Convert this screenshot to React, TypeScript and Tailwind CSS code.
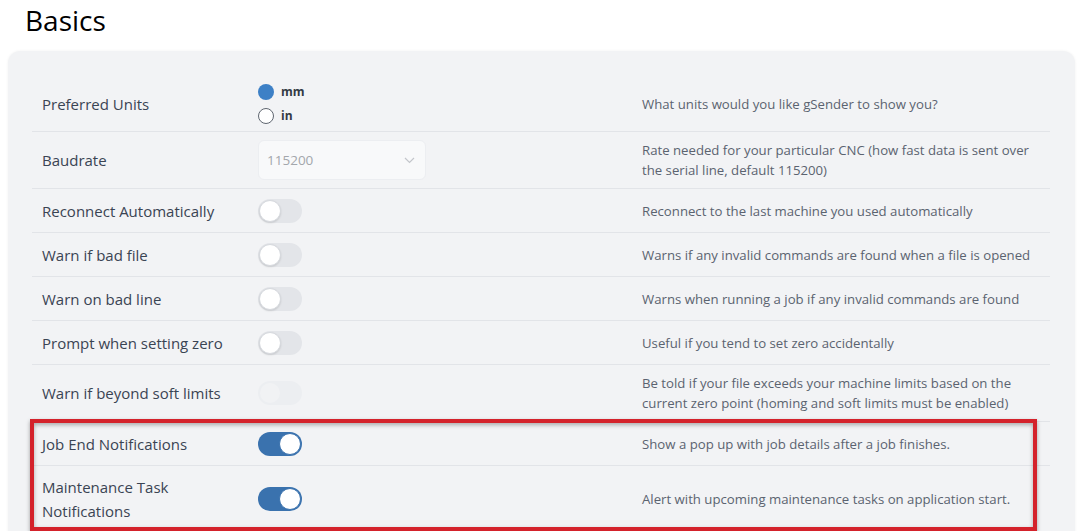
import React from "react";

type Row = {
  label: React.ReactNode;
  control: React.ReactNode;
  desc: React.ReactNode;
  h: string;
};

function Toggle({ on, disabled }: { on?: boolean; disabled?: boolean }) {
  if (disabled) {
    return (
      <div className="w-[44px] h-[24px] rounded-full bg-[#eceef1] flex items-center px-[2px]">
        <div className="w-[20px] h-[20px] rounded-full bg-[#f1f2f4]" />
      </div>
    );
  }
  if (on) {
    return (
      <div className="w-[44px] h-[24px] rounded-full bg-[#3a72ae] flex items-center justify-end px-[1px]">
        <div className="w-[22px] h-[22px] rounded-full bg-white border border-[#3a72ae]" />
      </div>
    );
  }
  return (
    <div className="w-[44px] h-[24px] rounded-full bg-[#e3e5e9] flex items-center px-[1px]">
      <div className="w-[22px] h-[22px] rounded-full bg-white border border-[#d6d9de] shadow-[0_1px_2px_rgba(0,0,0,0.12)]" />
    </div>
  );
}

function Radios() {
  return (
    <div className="flex flex-col gap-[8px] text-[12px] font-bold text-[#333a44]">
      <div className="flex items-center gap-[7px] h-[16px]">
        <div className="w-[16px] h-[16px] rounded-full bg-[#3d80c6]" />
        <span>mm</span>
      </div>
      <div className="flex items-center gap-[7px] h-[16px]">
        <div className="w-[16px] h-[16px] rounded-full bg-white border border-[#5f6670]" />
        <span>in</span>
      </div>
    </div>
  );
}

function Select() {
  return (
    <div className="w-[168px] h-[40px] rounded-[6px] bg-[#f8f9fa] border border-[#eceef1] flex items-center justify-between pl-[8px] pr-[10px] text-[13.5px] text-[#a3a7ac]">
      <span>115200</span>
      <svg width="11" height="7" viewBox="0 0 11 7" fill="none">
        <path d="M1 1l4.5 4.5L10 1" stroke="#c3c6cb" strokeWidth="1.2" />
      </svg>
    </div>
  );
}

export default function App() {
  const rows: Row[] = [
    { label: "Preferred Units", control: <Radios />, desc: "What units would you like gSender to show you?", h: "h-[56px]" },
    {
      label: "Baudrate",
      control: <Select />,
      desc: (
        <>
          Rate needed for your particular CNC (how fast data is sent over
          <br />
          the serial line, default 115200)
        </>
      ),
      h: "h-[57px]",
    },
    { label: "Reconnect Automatically", control: <Toggle />, desc: "Reconnect to the last machine you used automatically", h: "h-[44px]" },
    { label: "Warn if bad file", control: <Toggle />, desc: "Warns if any invalid commands are found when a file is opened", h: "h-[44px]" },
    { label: "Warn on bad line", control: <Toggle />, desc: "Warns when running a job if any invalid commands are found", h: "h-[44px]" },
    { label: "Prompt when setting zero", control: <Toggle />, desc: "Useful if you tend to set zero accidentally", h: "h-[44px]" },
    {
      label: "Warn if beyond soft limits",
      control: <Toggle disabled />,
      desc: (
        <>
          Be told if your file exceeds your machine limits based on the
          <br />
          current zero point (homing and soft limits must be enabled)
        </>
      ),
      h: "h-[57px]",
    },
    { label: "Job End Notifications", control: <Toggle on />, desc: "Show a pop up with job details after a job finishes.", h: "h-[44px]" },
    {
      label: (
        <>
          Maintenance Task
          <br />
          Notifications
        </>
      ),
      control: <Toggle on />,
      desc: "Alert with upcoming maintenance tasks on application start.",
      h: "h-[66px]",
    },
  ];

  return (
    <div
      className="relative w-[1086px] h-[531px] overflow-hidden bg-white"
      style={{ fontFamily: '"Open Sans", "Noto Sans", sans-serif' }}
    >
      <h1 className="pl-[25px] pt-[1px] text-[28px] leading-[38px] text-black font-normal">Basics</h1>
      <div className="mt-[12px] ml-[8px] w-[1067px] rounded-[12px] bg-[#f2f3f5] shadow-[0_0_3px_rgba(0,0,0,0.06)] pl-[24px] pr-[25px] pt-[25px] pb-[24px]">
        {rows.map((r, i) => (
          <div
            key={i}
            className={`${r.h} grid grid-cols-[226px_384px_1fr] items-center border-b border-[#e2e4e8]`}
          >
            <div className="pl-[10px] text-[15px] leading-[24px] text-[#3a4453]">{r.label}</div>
            <div>{r.control}</div>
            <div className="text-[13.2px] leading-[20px] text-[#5b6370]">{r.desc}</div>
          </div>
        ))}
      </div>
      <div className="absolute left-[30px] top-[419px] w-[1007px] h-[112px] border-[4px] border-[#d4222b] shadow-[0_2px_4px_rgba(0,0,0,0.35),inset_0_2px_4px_rgba(0,0,0,0.3)]" />
    </div>
  );
}
